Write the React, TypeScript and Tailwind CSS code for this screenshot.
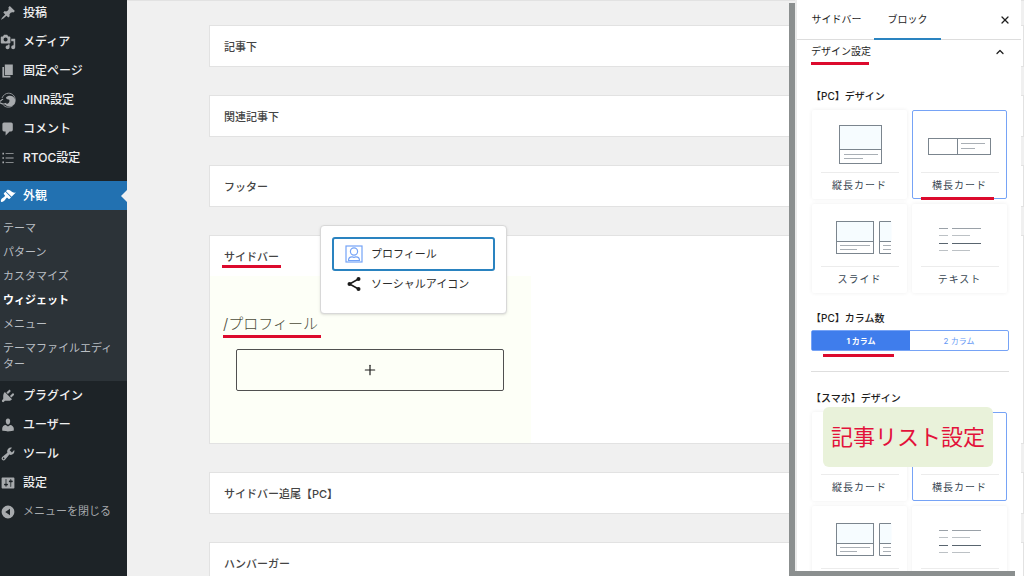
import { useState, type ReactNode } from 'react';
import clsx from 'clsx';
import { ChevronUp, Plus, X } from 'lucide-react';

const Icon = ({ children }: { children: ReactNode }) => (
    <svg viewBox="0 0 20 20" className="h-4 w-4 shrink-0" fill="currentColor" aria-hidden="true">
        {children}
    </svg>
);

const pin = (
    <path d="M10.44 3.02l1.82-1.82 6.36 6.35-1.83 1.82c-1.05-.68-2.48-.57-3.41.36l-.75.75c-.92.93-1.04 2.35-.35 3.41l-1.83 1.82-2.41-2.41-2.8 2.79c-.42.42-3.38 2.71-3.8 2.29s1.86-3.39 2.28-3.81l2.79-2.79L4.1 9.36l1.83-1.82c1.05.69 2.48.57 3.4-.36l.75-.75c.93-.92 1.05-2.35.36-3.41z" />
);
const media = (
    <path d="M13 11V4c0-.55-.45-1-1-1h-1.67L9 1H5L3.67 3H2c-.55 0-1 .45-1 1v7c0 .55.45 1 1 1h10c.55 0 1-.45 1-1zM7 4.5c1.38 0 2.5 1.12 2.5 2.5S8.38 9.5 7 9.5 4.5 8.38 4.5 7 5.62 4.5 7 4.5zM14 6h5v10.5c0 1.38-1.12 2.5-2.5 2.5S14 17.88 14 16.5s1.12-2.5 2.5-2.5c.17 0 .34.02.5.05V9h-3V6zm-4 8.05V13h2v3.5c0 1.38-1.12 2.5-2.5 2.5S7 17.88 7 16.5 8.12 14 9.5 14c.17 0 .34.02.5.05z" />
);
const pages = <path d="M6 15V2h10v13H6zm-1 1h8v2H3V5h2v11z" />;
const jinr = (
    <>
        <path
            d="M2.500 7.500C4 4 7 1.500 10.500 1.500c5 0 8.500 3.500 8.500 8.500s-3.500 9-8.500 9c-3.500 0-5.500-1.500-7-3.500"
            fill="none"
            stroke="currentColor"
            strokeWidth="1"
        />
        <path
            d="M0 11.500c1.500-.5 2-2.500 4-2.500M0 13.500c2.500 2 6 1.500 8 .5"
            fill="none"
            stroke="currentColor"
            strokeWidth="1.400"
        />
        <path d="M7.500 7c2.500-3 8-3 10.500.5 2.500 4 0 10-5.500 10.500-3 .2-5.500-1-6.500-3 2.500.5 4.500-.5 5.500-2.500.8-1.800.2-3-1.200-3C9 9.500 7.500 8.500 7.500 7z" />
    </>
);
const comment = <path d="M5 2h9c1.100 0 2 .9 2 2v7c0 1.100-.9 2-2 2h-2l-5 5v-5H5c-1.100 0-2-.9-2-2V4c0-1.100.9-2 2-2z" />;
const list = (
    <>
        <path d="M3 3.500h2v2H3zM3 9h2v2H3zM3 14.500h2v2H3z" />
        <path d="M7 4h10v1H7zM7 9.500h10v1H7zM7 15h10v1H7z" />
    </>
);
const brush = (
    <path d="M14.48 11.06L7.41 3.99l1.5-1.5c.5-.56 2.3-.47 3.51.32 1.21.8 1.43 1.28 2.91 2.1 1.18.64 2.45 1.26 4.45.85zm-.71.71L6.7 4.7 4.93 6.47c-.39.39-.39 1.02 0 1.41l1.06 1.06c.39.39.39 1.03 0 1.42-.6.6-1.43 1.11-2.21 1.69-.35.26-.7.53-1.01.84C1.43 14.23.4 16.08 1.4 17.07c.99 1 2.84-.03 4.18-1.36.31-.31.58-.66.85-1.02.57-.78 1.08-1.61 1.69-2.21.39-.39 1.02-.39 1.41 0l1.06 1.06c.39.39 1.02.39 1.41 0z" />
);
const plug = (
    <path d="M13.11 4.36L9.87 7.6 8 5.73l3.24-3.24c.35-.34 1.05-.2 1.56.32.52.51.66 1.21.31 1.55zm-8 1.77l.91-1.12 9.01 9.01-1.19.84c-.71.71-2.63 1.16-3.82 1.16H6.14L4.9 17.26c-.59.59-1.54.59-2.12 0-.59-.58-.59-1.53 0-2.12l1.24-1.24v-3.88c0-1.13.4-3.19 1.09-3.89zm7.26 3.97l3.24-3.24c.34-.35 1.04-.21 1.55.31.52.51.66 1.21.31 1.55l-3.24 3.25z" />
);
const user = (
    <path d="M10 9.25c-2.27 0-2.73-3.44-2.73-3.44C7 4.02 7.82 2 9.97 2c2.16 0 2.98 2.02 2.71 3.81 0 0-.41 3.44-2.68 3.44zm0 2.57L12.72 10c2.39 0 4.52 2.33 4.52 4.53v2.49s-3.65 1.13-7.24 1.13c-3.65 0-7.24-1.13-7.24-1.13v-2.49c0-2.25 1.94-4.48 4.47-4.48z" />
);
const wrench = (
    <path d="M16.68 9.77c-1.34 1.34-3.3 1.67-4.95.99l-5.41 6.52c-.99.99-2.59.99-3.58 0s-.99-2.59 0-3.57l6.52-5.42c-.68-1.65-.35-3.61.99-4.95 1.28-1.28 3.12-1.62 4.72-1.06l-2.89 2.89 2.82 2.82 2.86-2.87c.53 1.58.18 3.39-1.08 4.65zM3.81 16.21c.4.39 1.04.39 1.43 0 .4-.4.4-1.04 0-1.43-.39-.4-1.03-.4-1.43 0-.39.39-.39 1.03 0 1.43z" />
);
const sliders = (
    <path d="M18 16V4c0-.55-.45-1-1-1H3c-.55 0-1 .45-1 1v12c0 .55.45 1 1 1h14c.55 0 1-.45 1-1zM8 11h1c.55 0 1 .45 1 1s-.45 1-1 1H8v1.5c0 .28-.22.5-.5.5s-.5-.22-.5-.5V13H6c-.55 0-1-.45-1-1s.45-1 1-1h1V5.5c0-.28.22-.5.5-.5s.5.22.5.5V11zm5-2h-1c-.55 0-1-.45-1-1s.45-1 1-1h1V5.5c0-.28.22-.5.5-.5s.5.22.5.5V7h1c.55 0 1 .45 1 1s-.45 1-1 1h-1v5.5c0 .28-.22.5-.5.5s-.5-.22-.5-.5V9z" />
);
const collapse = <path fillRule="evenodd" d="M10 2a8 8 0 1 0 0 16 8 8 0 0 0 0-16zm2.500 4v8l-6-4z" />;

const topItems = [
    { label: '投稿', icon: pin },
    { label: 'メディア', icon: media },
    { label: '固定ページ', icon: pages },
    { label: 'JINR設定', icon: jinr },
    { label: 'コメント', icon: comment },
    { label: 'RTOC設定', icon: list },
];

const subItems = ['テーマ', 'パターン', 'カスタマイズ', 'ウィジェット', 'メニュー', 'テーマファイルエディター'];

const bottomItems = [
    { label: 'プラグイン', icon: plug },
    { label: 'ユーザー', icon: user },
    { label: 'ツール', icon: wrench },
    { label: '設定', icon: sliders },
];

const MenuLink = ({ label, icon }: { label: string; icon: ReactNode }) => (
    <a href="#" className="flex h-[29px] items-center gap-[7px] text-xs font-medium text-[#f0f0f1]">
        <span className="text-[#a7aaad]">
            <Icon>{icon}</Icon>
        </span>
        {label}
    </a>
);

const AdminMenu = () => (
    <nav className="w-[127px] shrink-0 bg-[#1d2327]">
        <div className="-mt-0.5 pb-[9px]">
            {topItems.map((item) => (
                <MenuLink key={item.label} {...item} />
            ))}
        </div>
        <a
            href="#"
            className="relative flex h-[29px] items-center gap-[7px] bg-[#2271b1] text-xs font-medium text-white"
        >
            <Icon>{brush}</Icon>
            外観
            <span className="absolute top-1/2 right-0 -translate-y-1/2 border-y-6 border-r-6 border-y-transparent border-r-[#f0f0f1]" />
        </a>
        <div className="bg-[#2c3338] pt-1.5 pr-3 pb-[5px] pl-[3px]">
            {subItems.map((label) => (
                <a
                    key={label}
                    href="#"
                    className={clsx(
                        'block py-1 text-[11px] leading-4',
                        label === 'ウィジェット' ? 'font-bold text-white' : 'text-[#b9bec3]',
                    )}
                >
                    {label}
                </a>
            ))}
        </div>
        {bottomItems.map((item) => (
            <MenuLink key={item.label} {...item} />
        ))}
        <button type="button" className="flex h-[29px] items-center gap-[7px] text-[11px] text-[#a7aaad]">
            <Icon>{collapse}</Icon>
            メニューを閉じる
        </button>
    </nav>
);

const WidgetArea = ({ title, marked, children }: { title: string; marked?: boolean; children?: ReactNode }) => (
    <section className="border border-[#e2e2e2] bg-white">
        <button
            type="button"
            className="flex h-10 w-full items-center px-3.5 pt-0.5 text-[11px] font-medium text-[#444444]"
        >
            <span className="relative">
                {title}
                {marked && <span className="absolute -inset-x-0.5 -bottom-[3px] h-[3px] bg-[#dc0a2d]" />}
            </span>
        </button>
        {children}
    </section>
);

const BlockPicker = () => (
    <div className="absolute -top-[51px] left-[110px] w-[187px] rounded-sm border border-[#d8d8d8] bg-white px-[11px] pt-[11px] pb-4 text-[11px] text-[#2c2c2c] shadow">
        <button
            type="button"
            className="flex h-[34px] w-full items-center gap-2 rounded-[3px] border-2 border-[#2a83c0] pl-[11px]"
        >
            <svg viewBox="0 0 18 18" className="h-[18px] w-[18px]" fill="none" stroke="#74a3f7" aria-hidden="true">
                <rect x="1" y="1" width="16" height="16" strokeWidth="1.200" />
                <circle cx="9" cy="6.500" r="3.600" strokeWidth="1.200" />
                <path
                    d="M3.500 15.500c0-2.500 1.500-3.700 3.500-3.700 1.200.7 2.800.7 4 0 2 0 3.500 1.200 3.500 3.700z"
                    strokeWidth="1.200"
                />
            </svg>
            プロフィール
        </button>
        <button type="button" className="flex h-[26px] w-full items-center gap-2 pl-[13px]">
            <svg viewBox="0 0 18 18" className="h-[18px] w-[18px]" fill="#1a1a1a" aria-hidden="true">
                <path d="M13.500 4L4.500 9l9 5" fill="none" stroke="#1a1a1a" strokeWidth="1.500" />
                <circle cx="13.500" cy="4" r="2" />
                <circle cx="4.500" cy="9" r="2" />
                <circle cx="13.500" cy="14" r="2" />
            </svg>
            ソーシャルアイコン
        </button>
    </div>
);

const SidebarBlocks = () => (
    <div className="relative w-[321px] bg-[#fdfff7] px-[13px] pt-9 pb-[52px]">
        <div className="relative w-[98px]">
            <input
                aria-label="ブロックを検索"
                defaultValue="/プロフィール"
                className="block h-6 w-full bg-transparent text-[15px] leading-6 font-light text-[#4c4c3a] outline-none"
            />
            <span className="absolute inset-x-0 -bottom-0.5 h-[3px] bg-[#dc0a2d]" />
        </div>
        <button
            type="button"
            aria-label="ブロックを追加"
            className="mx-[13px] mt-[13px] flex h-[42px] w-[268px] items-center justify-center rounded-xs border border-[#505050] text-[#1e1e1e]"
        >
            <Plus className="h-4 w-4" strokeWidth={1.8} />
        </button>
        <BlockPicker />
    </div>
);

const lineColor = '#7b858e';

const CardArt = () => (
    <>
        <rect x="26.500" y="14.500" width="42" height="24" fill="#f6fcff" />
        <rect x="26.500" y="14.500" width="42" height="38" />
        <path d="M31 43.500h34M31 47.500h19" stroke="#a9afb5" />
    </>
);
const WideArt = () => (
    <>
        <rect x="15.500" y="27.500" width="62" height="16" />
        <path d="M44.500 27.500v16" />
        <path d="M48 32.500h24M48 37.500h14" stroke="#a9afb5" />
    </>
);
const SlideArt = () => (
    <>
        <path d="M23.500 16.500h37v20h-37zM66.500 16.500h12v20h-12z" fill="#f6fcff" stroke="none" />
        <rect x="23.500" y="16.500" width="37" height="32" />
        <path d="M23.500 36.500h37M78 16.500H66.500v32H78M66.500 36.500H78" />
        <path d="M27 40.500h30M27 44.500h17M70 40.500h8M70 44.500h8" stroke="#a9afb5" />
    </>
);
const TextArt = () => (
    <>
        <path d="M26 23.500h9M39 23.500h29" stroke="#9aa1a8" />
        <path d="M26 30.500h9M39 30.500h18M26 45.500h9M39 45.500h18" stroke="#bcc1c5" />
        <path d="M26 38.500h9M39 38.500h29" stroke="#59656f" />
    </>
);

const designs = [
    { label: '縦長カード', Art: CardArt },
    { label: '横長カード', Art: WideArt },
    { label: 'スライド', Art: SlideArt },
    { label: 'テキスト', Art: TextArt },
];

const DesignPicker = ({ marked }: { marked?: boolean }) => {
    const [selected, setSelected] = useState('横長カード');

    return (
        <div className="mr-0.5 ml-px grid grid-cols-2 gap-x-[5px] gap-y-[5px]">
            {designs.map(({ label, Art }) => (
                <button
                    key={label}
                    type="button"
                    aria-pressed={selected === label}
                    onClick={() => setSelected(label)}
                    className={clsx(
                        'relative flex h-[89px] flex-col items-center rounded-xs border',
                        selected === label ? 'border-[#76a3f6]' : 'border-transparent shadow-[0_0_4px_#00000012]',
                    )}
                >
                    <svg viewBox="0 0 94 61" className="h-[61px] w-[94px]" fill="none" stroke={lineColor} aria-hidden="true">
                        <Art />
                    </svg>
                    <span className="w-[78px] border-t border-[#ececec] pt-1 text-center text-[10px] leading-4 tracking-widest text-[#3a4854]">
                        {label}
                    </span>
                    {marked && selected === label && (
                        <span className="absolute right-3 -bottom-0.5 left-2 h-[3px] bg-[#dc0a2d]" />
                    )}
                </button>
            ))}
        </div>
    );
};

const SettingsPanel = () => {
    const [columns, setColumns] = useState(1);

    return (
        <aside className="absolute top-0 right-[3px] bottom-[5px] w-[226px] overflow-clip border-l-2 border-[#ebebeb] bg-white text-[10px] text-[#1e1e1e]">
            <div className="flex h-10 items-stretch border-b border-[#dddddd]">
                <button type="button" className="w-[77px] pl-0.5">
                    サイドバー
                </button>
                <button type="button" className="-mb-px w-[67px] border-b-2 border-[#2a83c0]">
                    ブロック
                </button>
                <button type="button" aria-label="閉じる" className="ml-auto px-2.5">
                    <X className="h-3 w-3" strokeWidth={2.5} />
                </button>
            </div>
            <div className="pr-3 pl-3.5">
                <button type="button" className="flex h-[23px] w-full items-center justify-between pr-[3px]">
                    <span className="relative">
                        デザイン設定
                        <span className="absolute right-0.5 -bottom-[6px] left-0 h-[3px] bg-[#dc0a2d]" />
                    </span>
                    <ChevronUp className="h-3 w-3" strokeWidth={2.5} />
                </button>

                <h3 className="mt-[25px] mb-1.5 leading-4 font-medium">【PC】デザイン</h3>
                <DesignPicker marked />

                <h3 className="mt-[17px] mb-1 leading-4 font-medium">【PC】カラム数</h3>
                <div className="relative flex h-[21px] rounded-xs border border-[#76a3f6] text-[8px]">
                    <button
                        type="button"
                        onClick={() => setColumns(1)}
                        className={clsx('flex-1', columns === 1 ? 'bg-[#3f7dec] font-bold text-white' : 'text-[#6699f5]')}
                    >
                        1 カラム
                    </button>
                    <button
                        type="button"
                        onClick={() => setColumns(2)}
                        className={clsx('flex-1', columns === 2 ? 'bg-[#3f7dec] font-bold text-white' : 'text-[#6699f5]')}
                    >
                        2 カラム
                    </button>
                    <span className="absolute -bottom-[7px] left-[11px] h-[3px] w-[71px] bg-[#dc0a2d]" />
                </div>
                <hr className="mt-5 border-[#dedede]" />

                <h3 className="mt-[18px] mb-1.5 leading-4 font-medium">【スマホ】デザイン</h3>
                <DesignPicker />
            </div>
        </aside>
    );
};

const App = () => (
    <div
        lang="ja"
        className="relative flex h-screen overflow-hidden bg-[#f0f0f0] font-[Inter,'Noto_Sans_CJK_JP',sans-serif]"
    >
        <AdminMenu />
        <main className="flex min-w-0 flex-1 flex-col gap-7 border-t border-[#e2e2e2] pt-6 pl-[82px]">
            <WidgetArea title="記事下" />
            <WidgetArea title="関連記事下" />
            <WidgetArea title="フッター" />
            <WidgetArea title="サイドバー" marked>
                <SidebarBlocks />
            </WidgetArea>
            <WidgetArea title="サイドバー追尾【PC】" />
            <WidgetArea title="ハンバーガー" />
        </main>
        {/* hard drop shadow, down and to the left of the settings panel */}
        <div className="absolute top-[3px] right-[9px] bottom-0 w-[226px] bg-[#8b8f8f]" />
        <SettingsPanel />
        <p className="absolute right-[31px] bottom-[109px] flex h-[60px] w-[170px] items-center justify-center rounded-md bg-[#e9f2da] text-[22px] whitespace-nowrap text-[#e3123b]">
            記事リスト設定
        </p>
    </div>
);

export default App;
